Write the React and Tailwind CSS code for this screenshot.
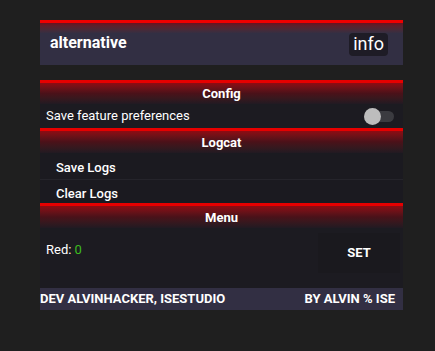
import React from 'react';

const SectionHeader = ({ title, h = 'h-[24px]' }) => (
  <div className={`${h} border-t-[3px] border-[#e60000] bg-gradient-to-b from-[#8f0b12] via-[#4a1119] to-[#211a22] flex items-center justify-center`}>
    <span className="text-[13px] font-bold text-white leading-none">{title}</span>
  </div>
);

const App = () => {
  return (
    <div className="w-[435px] h-[351px] bg-[#1f1f1f] pt-[20px] pl-[40px] font-['Roboto','Liberation_Sans',sans-serif]">
      <div className="w-[363px]">
        {/* Header */}
        <div className="h-[45px] border-t-[3px] border-[#ee0000] bg-gradient-to-b from-[#6a1020] from-0% to-[#322f43] to-25% flex items-center justify-between pl-[10px] pr-[15px]">
          <span className="text-[16px] font-bold text-white -mt-[3px]">alternative</span>
          <span className="bg-[#1e1c26] rounded-[4px] px-[4px] h-[23px] flex items-center text-[18px] text-white leading-none">info</span>
        </div>

        <div className="h-[15px]" />

        {/* Config */}
        <div className="bg-[#1c1b21]">
          <SectionHeader title="Config" />
          <div className="h-[24px] flex items-center justify-between pl-[6px] pr-[9px]">
            <span className="text-[13px] text-white">Save feature preferences</span>
            <div className="relative w-[30px] h-[16px] flex items-center">
              <div className="w-full h-[11px] rounded-full bg-[#3b3b40] ml-[6px]" />
              <div className="absolute left-0 w-[17px] h-[17px] rounded-full bg-[#bdbdbd]" />
            </div>
          </div>

          {/* Logcat */}
          <SectionHeader title="Logcat" h="h-[25px]" />
          <div className="h-[27px] flex items-center pl-[16px] pt-[4px] border-b border-[#25242b] bg-[#1b1a20]">
            <span className="text-[13px] text-white font-medium">Save Logs</span>
          </div>
          <div className="h-[23px] flex items-center pl-[16px] pt-[4px] bg-[#1b1a20]">
            <span className="text-[13px] text-white font-medium">Clear Logs</span>
          </div>

          {/* Menu */}
          <SectionHeader title="Menu" h="h-[25px]" />
          <div className="h-[60px] flex justify-between pl-[6px] pr-[3px]">
            <span className="text-[13px] text-white mt-[12px]">
              Red: <span className="text-[#3dbb1f]">0</span>
            </span>
            <div className="mt-[5px] w-[82px] h-[40px] bg-[#1a191e] flex items-center justify-center">
              <span className="text-[13px] font-bold text-white">SET</span>
            </div>
          </div>
        </div>

        {/* Footer */}
        <div className="h-[22px] bg-[#322f43] flex items-center justify-between pr-[8px]">
          <span className="text-[13px] font-bold text-white">DEV ALVINHACKER, ISESTUDIO</span>
          <span className="text-[13px] font-bold text-white">BY ALVIN % ISE</span>
        </div>
      </div>
    </div>
  );
};

export default App;
